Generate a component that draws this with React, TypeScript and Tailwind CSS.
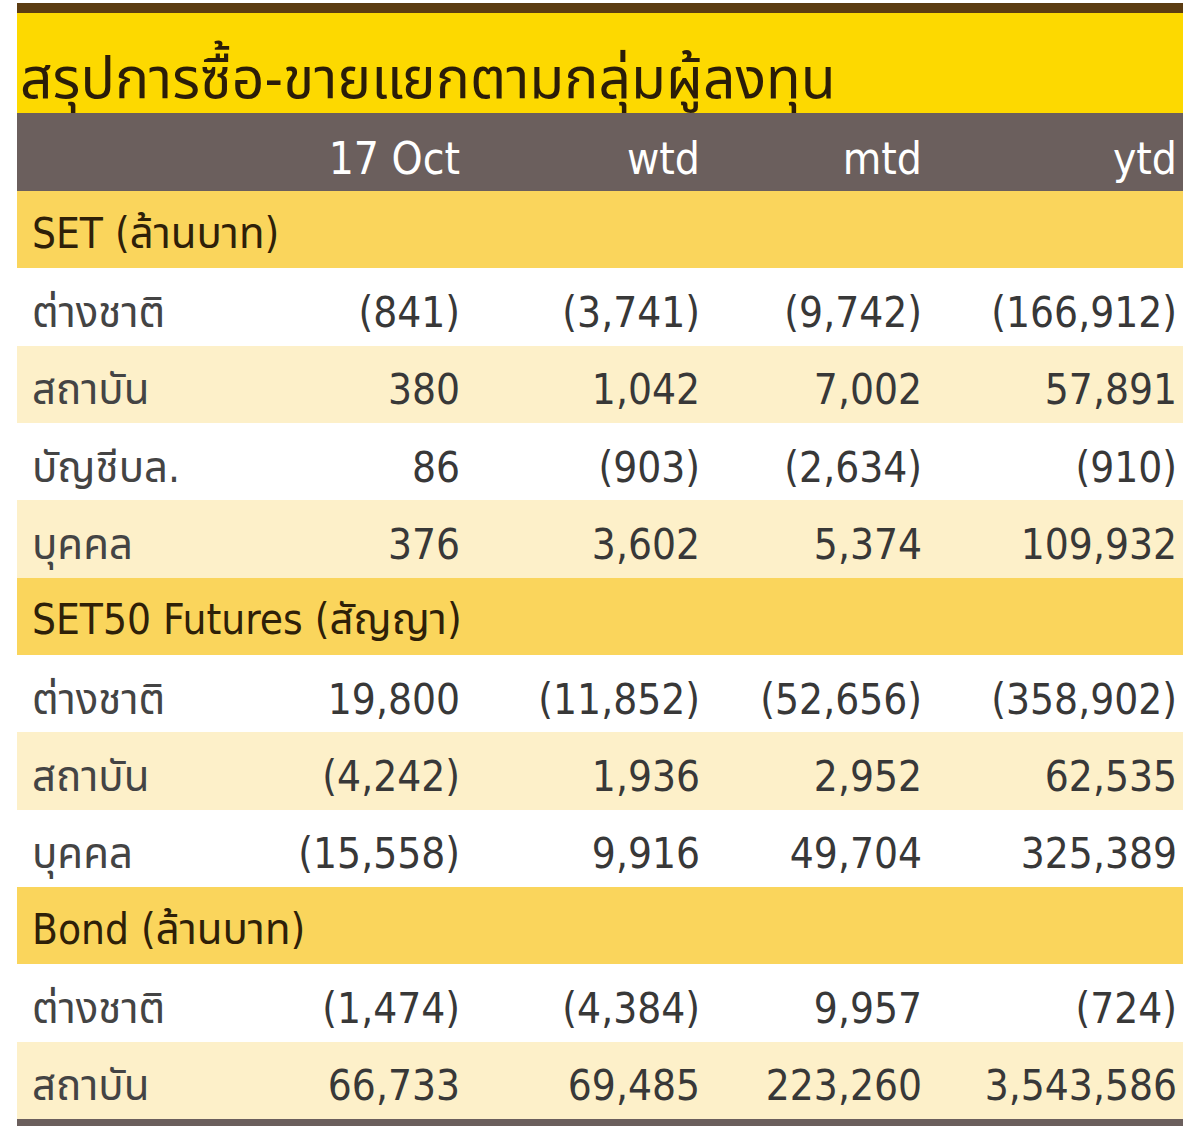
import React from 'react';

type Row = { label: string; values: string[]; shade?: boolean };
type Section = { title: string; rows: Row[] };

const sections: Section[] = [
  {
    title: 'SET (ล้านบาท)',
    rows: [
      { label: 'ต่างชาติ', values: ['(841)', '(3,741)', '(9,742)', '(166,912)'] },
      { label: 'สถาบัน', values: ['380', '1,042', '7,002', '57,891'], shade: true },
      { label: 'บัญชีบล.', values: ['86', '(903)', '(2,634)', '(910)'] },
      { label: 'บุคคล', values: ['376', '3,602', '5,374', '109,932'], shade: true },
    ],
  },
  {
    title: 'SET50 Futures (สัญญา)',
    rows: [
      { label: 'ต่างชาติ', values: ['19,800', '(11,852)', '(52,656)', '(358,902)'] },
      { label: 'สถาบัน', values: ['(4,242)', '1,936', '2,952', '62,535'], shade: true },
      { label: 'บุคคล', values: ['(15,558)', '9,916', '49,704', '325,389'] },
    ],
  },
  {
    title: 'Bond (ล้านบาท)',
    rows: [
      { label: 'ต่างชาติ', values: ['(1,474)', '(4,384)', '9,957', '(724)'] },
      { label: 'สถาบัน', values: ['66,733', '69,485', '223,260', '3,543,586'], shade: true },
    ],
  },
];

const grid = 'grid grid-cols-[203px_240px_240px_222px_255px] pr-[6px]';

export default function App() {
  return (
    <div className="min-h-[1146px] w-[1200px] bg-white pt-[3px] font-['DejaVu_Sans_Condensed','Noto_Sans_Thai','Noto_Sans',sans-serif]">
      <div className="ml-[17px] w-[1166px]">
        <div className="h-[10px] bg-[#5c3d12]" />
        <div className="flex h-[100px] items-end bg-[#fdd900] pb-[6px] pl-[3px] text-[57px] leading-none text-[#2b1d08]">
          สรุปการซื้อ-ขายแยกตามกลุ่มผู้ลงทุน
        </div>
        <div className={`${grid} h-[78px] items-center bg-[#6b5f5d] pt-[14px] text-[44px] leading-none text-white`}>
          <div />
          <div className="text-right">17 Oct</div>
          <div className="text-right">wtd</div>
          <div className="text-right">mtd</div>
          <div className="text-right">ytd</div>
        </div>
        {sections.map((s) => (
          <div key={s.title}>
            <div className="flex h-[77.33px] items-center bg-[#fad55c] pl-[15px] pt-[8px] text-[42px] leading-none text-[#2e2008]">
              {s.title}
            </div>
            {s.rows.map((r, i) => (
              <div
                key={s.title + i}
                className={`${grid} h-[77.33px] items-center pt-[12px] text-[42px] leading-none text-[#383838] ${
                  r.shade ? 'bg-[#fdf0c9]' : 'bg-white'
                }`}
              >
                <div className="pl-[15px] text-[#444]">{r.label}</div>
                {r.values.map((v, j) => (
                  <div key={j} className="text-right">
                    {v}
                  </div>
                ))}
              </div>
            ))}
          </div>
        ))}
        <div className="h-[7px] bg-[#6b5f5d]" />
      </div>
    </div>
  );
}
